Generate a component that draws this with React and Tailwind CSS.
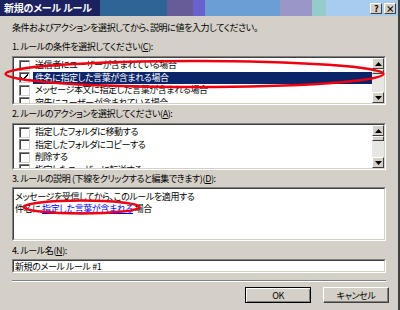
import React from 'react';

const font = "font-['MS_UI_Gothic','Noto_Sans_CJK_JP',sans-serif]";

const Check = ({ checked }) => (
  <span className="w-[11px] h-[11px] shrink-0 bg-white border border-t-[#808080] border-l-[#808080] border-r-[#d4d0c8] border-b-[#d4d0c8] shadow-[inset_1px_1px_0_#404040] flex items-center justify-center">
    {checked && (
      <svg width="7" height="7" viewBox="0 0 7 7">
        <path d="M0 3 L2 5 L7 0 M0 4 L2 6 L7 1" stroke="#000" strokeWidth="1" fill="none" />
      </svg>
    )}
  </span>
);

const Arrow = ({ up }) => (
  <div className="w-[12px] h-[11px] bg-[#d4d0c8] border border-t-white border-l-white border-r-[#404040] border-b-[#404040] flex items-center justify-center">
    <svg width="7" height="4" viewBox="0 0 7 4">
      <path d={up ? 'M3.5 0 L7 4 L0 4 Z' : 'M0 0 L7 0 L3.5 4 Z'} fill="#000" />
    </svg>
  </div>
);

const ScrollBar = () => (
  <div className="w-[12px] flex flex-col shrink-0">
    <Arrow up />
    <div className="h-[5px] bg-[#d4d0c8] border border-t-white border-l-white border-r-[#404040] border-b-[#404040]" />
    <div className="flex-1 bg-[#e8e6e2]" />
    <Arrow />
  </div>
);

const ListBox = ({ items, selected, height }) => (
  <div className={`mx-[12px] border border-t-[#808080] border-l-[#808080] border-r-white border-b-white ${height}`}>
    <div className="h-full flex border border-t-[#404040] border-l-[#404040] border-r-[#d4d0c8] border-b-[#d4d0c8] bg-white">
      <div className="flex-1 overflow-hidden pl-[5px] pt-[1px]">
        {items.map((it, i) => (
          <div key={i} className="h-[12.5px] flex items-center gap-[3px]">
            <Check checked={i === selected} />
            <span className={`pl-[2px] flex-1 h-[12px] leading-[12px] whitespace-nowrap ${i === selected ? 'bg-[#0a246a] text-white' : ''}`}>{it}</span>
          </div>
        ))}
      </div>
      <ScrollBar />
    </div>
  </div>
);

export default function App() {
  return (
    <div className={`w-[400px] h-[310px] bg-[#d4d0c8] relative overflow-hidden text-[9px] text-black ${font} [font-feature-settings:'palt'] tracking-[-0.4px] border-r-2 border-r-[#404040]`}>
      {/* タイトルバー */}
      <div className="h-[16px] flex items-center justify-between pl-[4px] pr-[2px] bg-[linear-gradient(to_right,#1c2260_0px,#1c2260_100px,#2f6496_100px,#2f6496_167px,#685c98_167px,#685c98_193px,#6a62cc_193px,#6a62cc_205px,#6a9ed4_205px,#6a9ed4_280px,#9b96c8_280px,#9b96c8_312px,#94cccc_312px,#94cccc_326px,#a8ccf0_326px)]">
        <span className="text-white font-bold text-[10px] tracking-[-0.2px] leading-none">新規のメール ルール</span>
        <div className="flex gap-[2px]">
          <div className="w-[12px] h-[11px] bg-[#d4d0c8] border border-t-white border-l-white border-r-[#404040] border-b-[#404040] flex items-center justify-center text-[9px] font-bold leading-none">?</div>
          <div className="w-[12px] h-[11px] bg-[#d4d0c8] border border-t-white border-l-white border-r-[#404040] border-b-[#404040] flex items-center justify-center text-[9px] font-bold leading-none">×</div>
        </div>
      </div>

      <div className="pt-[6px]">
        <div className="px-[12px] h-[12px] leading-[12px]">条件およびアクションを選択してから、説明に値を入力してください。</div>
        <div className="px-[12px] mt-[7px] h-[12px] leading-[12px]">1. ルールの条件を選択してください(<u>C</u>):</div>
        <div className="mt-[3px]">
          <ListBox
            height="h-[49px]"
            selected={1}
            items={[
              '送信者にユーザーが含まれている場合',
              '件名に指定した言葉が含まれる場合',
              'メッセージ本文に指定した言葉が含まれる場合',
              '宛先にユーザーが含まれている場合',
            ]}
          />
        </div>
        <div className="px-[12px] mt-[3px] h-[12px] leading-[12px]">2. ルールのアクションを選択してください(<u>A</u>):</div>
        <div className="mt-[3px]">
          <ListBox
            height="h-[47px]"
            selected={-1}
            items={[
              '指定したフォルダに移動する',
              '指定したフォルダにコピーする',
              '削除する',
              '指定したユーザーに転送する',
            ]}
          />
        </div>
        <div className="px-[12px] mt-[3px] h-[12px] leading-[12px]">3. ルールの説明 (下線をクリックすると編集できます)(<u>D</u>):</div>
        <div className="mx-[12px] mt-[2px] h-[54px] border border-t-[#808080] border-l-[#808080] border-r-white border-b-white">
          <div className="h-full border border-t-[#404040] border-l-[#404040] border-r-[#d4d0c8] border-b-[#d4d0c8] bg-white px-[1px] pt-[2px] leading-[12px]">
            <div>メッセージを受信してから、このルールを適用する</div>
            <div>
              件名に <span className="text-[#0000ff] underline">指定した言葉が含まれる</span> 場合
            </div>
          </div>
        </div>
        <div className="px-[12px] mt-[4px] h-[12px] leading-[12px]">4. ルール名(<u>N</u>):</div>
        <div className="mx-[12px] mt-[2px] h-[14px] border border-t-[#808080] border-l-[#808080] border-r-white border-b-white">
          <div className="h-full border border-t-[#404040] border-l-[#404040] border-r-[#d4d0c8] border-b-[#d4d0c8] bg-white px-[1px] leading-[11px]">
            新規のメール ルール #1
          </div>
        </div>
        <div className="mx-[12px] mt-[7px] border-t border-t-[#808080] border-b border-b-white" />
        <div className="flex justify-end gap-[12px] pr-[9px] mt-[5px]">
          <button className="w-[66px] h-[16px] bg-[#d4d0c8] border border-[#000] shadow-[inset_1px_1px_0_#fff,inset_-1px_-1px_0_#808080] leading-none">OK</button>
          <button className="w-[66px] h-[16px] bg-[#d4d0c8] border border-t-white border-l-white border-r-[#404040] border-b-[#404040] shadow-[inset_-1px_-1px_0_#808080] leading-none">キャンセル</button>
        </div>
      </div>

      {/* 赤い楕円 */}
      <svg className="absolute left-0 top-0 pointer-events-none" width="400" height="310">
        <ellipse cx="194.5" cy="74" rx="189" ry="13" fill="none" stroke="#ee0010" strokeWidth="2.5" />
        <ellipse cx="81.5" cy="207" rx="58" ry="6.5" fill="none" stroke="#ee0010" strokeWidth="2.5" />
      </svg>
    </div>
  );
}
